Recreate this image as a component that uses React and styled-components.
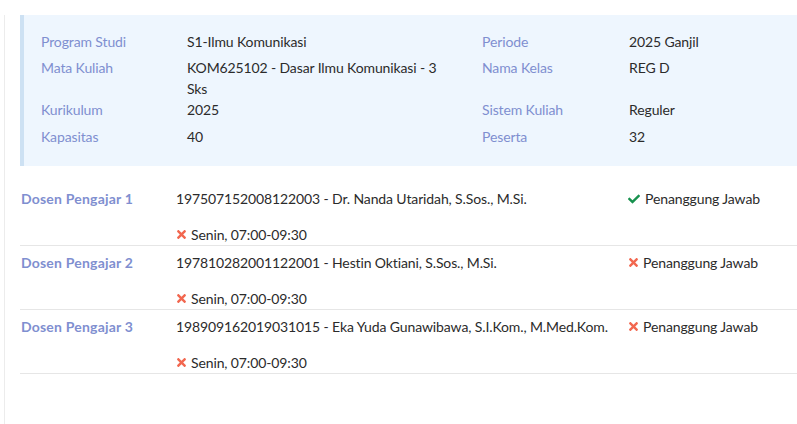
import React from "react";
import styled, { createGlobalStyle } from "styled-components";
import { FaCheck, FaTimes } from "react-icons/fa";

const Global = createGlobalStyle`
  html, body { margin: 0; padding: 0; background: #fff; }
  body { font-family: "Lato", "Noto Sans", sans-serif; font-size: 14px; color: #333; letter-spacing: -0.12px; }
`;

const Page = styled.div`
  padding: 15px 0 0 4px;
`;

const Card = styled.div`
  border-left: 1px solid #ececec;
  min-height: 409px;
  padding-left: 15px;
`;

const InfoBox = styled.div`
  background: #eef6fe;
  border-left: 4px solid #cde1f3;
  padding: 15.5px 0 14px 17px;
  display: grid;
  grid-template-columns: 146px 256px 39px 147px 1fr;
  align-items: start;
`;

const InfoRow = styled.div`
  display: contents;
`;

const Label = styled.div`
  grid-column: ${(p) => (p.$right ? 4 : 1)};
  color: #7f8fd0;
  line-height: 21px;
  padding-bottom: 5.5px;
`;

const Value = styled.div`
  grid-column: ${(p) => (p.$right ? 5 : 2)};
  color: #2b2b2b;
  line-height: 21px;
`;

const List = styled.div`
  margin-top: 16px;
`;

const Row = styled.div`
  display: grid;
  grid-template-columns: 155px 452px 1fr;
  align-items: start;
  border-bottom: 1px solid #e6e6e6;
  padding-top: 6px;
  padding-left: 1px;
`;

const DosenLabel = styled.div`
  color: #7f8fd0;
  font-weight: 700;
  line-height: 21px;
  letter-spacing: 0.2px;
`;

const Cell = styled.div`
  display: flex;
  flex-direction: column;
  gap: 15px;
  line-height: 21px;
  color: #2b2b2b;
`;

const Status = styled.div`
  display: flex;
  align-items: center;
  gap: ${(p) => (p.$ok ? "5px" : "4px")};
  line-height: 21px;
  color: #2b2b2b;
`;

const Sched = styled.div`
  display: flex;
  align-items: center;
  gap: 4px;
`;

const Ok = styled(FaCheck)`
  color: #17914e;
  width: 12px;
  height: 12px;
`;

const No = styled(FaTimes)`
  color: #f2674f;
  width: 11px;
  height: 13px;
`;

const rows = [
  ["Program Studi", "S1-Ilmu Komunikasi", "Periode", "2025 Ganjil"],
  ["Mata Kuliah", "KOM625102 - Dasar Ilmu Komunikasi - 3 Sks", "Nama Kelas", "REG D"],
  ["Kurikulum", "2025", "Sistem Kuliah", "Reguler"],
  ["Kapasitas", "40", "Peserta", "32"],
];

const dosen = [
  { n: 1, name: "197507152008122003 - Dr. Nanda Utaridah, S.Sos., M.Si.", ok: true },
  { n: 2, name: "197810282001122001 - Hestin Oktiani, S.Sos., M.Si.", ok: false },
  { n: 3, name: "198909162019031015 - Eka Yuda Gunawibawa, S.I.Kom., M.Med.Kom.", ok: false },
];

export default function App() {
  return (
    <>
      <Global />
      <Page>
        <Card>
          <InfoBox>
            {rows.map(([l1, v1, l2, v2]) => (
              <InfoRow key={l1}>
                <Label>{l1}</Label>
                <Value>{v1}</Value>
                <Label $right>{l2}</Label>
                <Value $right>{v2}</Value>
              </InfoRow>
            ))}
          </InfoBox>
          <List>
            {dosen.map((d) => (
              <Row key={d.n}>
                <DosenLabel>Dosen Pengajar {d.n}</DosenLabel>
                <Cell>
                  <div>{d.name}</div>
                  <Sched>
                    <No />
                    <span>Senin, 07:00-09:30</span>
                  </Sched>
                </Cell>
                <Status $ok={d.ok}>
                  {d.ok ? <Ok /> : <No />}
                  <span>Penanggung Jawab</span>
                </Status>
              </Row>
            ))}
          </List>
        </Card>
      </Page>
    </>
  );
}
